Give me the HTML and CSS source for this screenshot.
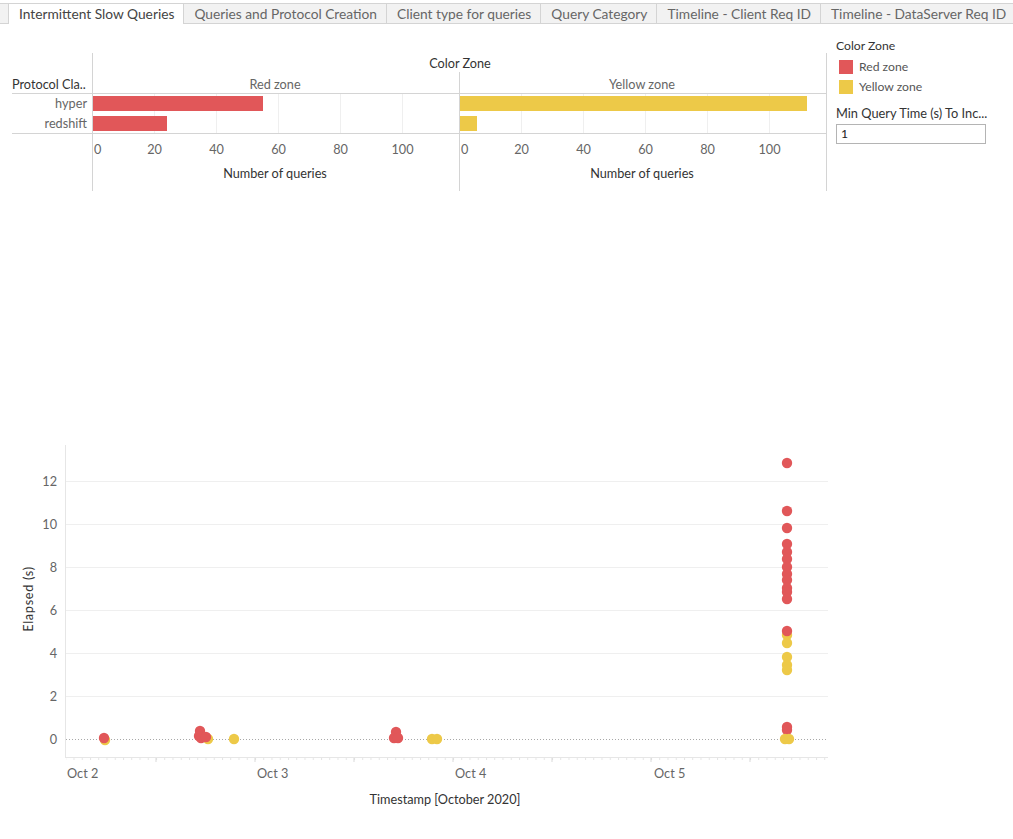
FILE: index.html
```html
<!DOCTYPE html>
<html>
<head>
<meta charset="utf-8">
<title>Intermittent Slow Queries</title>
<link rel="stylesheet" href="styles.css">
</head>
<body>
<div class="tabs">
  <div class="tab active">Intermittent Slow Queries</div>
  <div class="tab">Queries and Protocol Creation</div>
  <div class="tab">Client type for queries</div>
  <div class="tab">Query Category</div>
  <div class="tab">Timeline - Client Req ID</div>
  <div class="tab">Timeline - DataServer Req ID</div>
</div>

<div class="top">
  <svg class="bars" width="830" height="160" viewBox="0 38 830 160">
    <text x="460" y="68" text-anchor="middle" class="t-dark">Color Zone</text>
    <path d="M154.5 94V133 M216.5 94V133 M278.5 94V133 M340.5 94V133 M402.5 94V133 M521.5 94V133 M583.5 94V133 M645.5 94V133 M707.5 94V133 M769.5 94V133" class="grid"/>
    <path d="M92.5 53V191 M459.5 72V191 M826.5 53V191 M12 93.5H827 M12 133.5H827" class="frame"/>
    <text x="12" y="89" class="t-dark">Protocol Cla..</text>
    <text x="275" y="89" text-anchor="middle" class="t-light">Red zone</text>
    <text x="642" y="89" text-anchor="middle" class="t-light">Yellow zone</text>
    <text x="87" y="108" text-anchor="end" class="t-light">hyper</text>
    <text x="87" y="128" text-anchor="end" class="t-light">redshift</text>
    <rect x="93" y="96" width="170" height="15" class="red"/>
    <rect x="93" y="116" width="74" height="15" class="red"/>
    <rect x="460" y="96" width="347" height="15" class="yellow"/>
    <rect x="460" y="116" width="17" height="15" class="yellow"/>
    <g class="t-light">
      <text x="94" y="154">0</text>
      <text x="154.5" y="154" text-anchor="middle">20</text>
      <text x="216.5" y="154" text-anchor="middle">40</text>
      <text x="278.5" y="154" text-anchor="middle">60</text>
      <text x="340.5" y="154" text-anchor="middle">80</text>
      <text x="402.5" y="154" text-anchor="middle">100</text>
      <text x="461" y="154">0</text>
      <text x="521.5" y="154" text-anchor="middle">20</text>
      <text x="583.5" y="154" text-anchor="middle">40</text>
      <text x="645.5" y="154" text-anchor="middle">60</text>
      <text x="707.5" y="154" text-anchor="middle">80</text>
      <text x="769.5" y="154" text-anchor="middle">100</text>
    </g>
    <text x="275" y="178" text-anchor="middle" class="t-dark">Number of queries</text>
    <text x="642" y="178" text-anchor="middle" class="t-dark">Number of queries</text>
  </svg>

  <div class="legend">
    <div class="legend-title">Color Zone</div>
    <div class="legend-items">
      <div class="legend-item"><span class="swatch swatch-red"></span>Red zone</div>
      <div class="legend-item"><span class="swatch swatch-yellow"></span>Yellow zone</div>
    </div>
    <div class="param-label">Min Query Time (s) To Inc...</div>
    <div class="param-input">1</div>
  </div>
</div>

<svg class="scatter" width="840" height="409" viewBox="0 430 840 409">
  <defs>
    <pattern id="minor" patternUnits="userSpaceOnUse" x="57" y="757" width="8.25" height="10">
      <rect x="0" y="0" width="1" height="3" fill="#e4e4e4"/>
    </pattern>
    <pattern id="major" patternUnits="userSpaceOnUse" x="155.5" y="757" width="99" height="10">
      <rect x="0" y="0" width="1" height="5" fill="#d8d8d8"/>
    </pattern>
  </defs>
  <path d="M66 481.5H828 M66 524.5H828 M66 567.5H828 M66 610.5H828 M66 653.5H828 M66 696.5H828" class="grid"/>
  <path d="M65.5 445V757 M65 757.5H828" class="axis"/>
  <rect x="66" y="758" width="762" height="3" fill="url(#minor)"/>
  <rect x="66" y="758" width="762" height="5" fill="url(#major)"/>
  <path d="M66 739.5H828" class="zero"/>

  <g class="t-light" text-anchor="end">
    <text x="57" y="486">12</text>
    <text x="57" y="529">10</text>
    <text x="57" y="572">8</text>
    <text x="57" y="615">6</text>
    <text x="57" y="658">4</text>
    <text x="57" y="701">2</text>
    <text x="57" y="744">0</text>
  </g>
  <text class="t-dark ylabel" transform="translate(33 599) rotate(-90)" text-anchor="middle">Elapsed (s)</text>

  <g class="t-light">
    <text x="67" y="778">Oct 2</text>
    <text x="257" y="778">Oct 3</text>
    <text x="455" y="778">Oct 4</text>
    <text x="654" y="778">Oct 5</text>
  </g>
  <text x="445" y="804" text-anchor="middle" class="t-dark">Timestamp [October 2020]</text>

  <g class="yellow">
    <circle cx="105" cy="740" r="5.2"/>
    <circle cx="208" cy="739" r="5.2"/>
    <circle cx="234" cy="739" r="5.2"/>
    <circle cx="432" cy="739" r="5.2"/>
    <circle cx="437" cy="739" r="5.2"/>
    <circle cx="787" cy="635" r="5.2"/>
    <circle cx="787" cy="643" r="5.2"/>
    <circle cx="787" cy="657" r="5.2"/>
    <circle cx="787" cy="665" r="5.2"/>
    <circle cx="787" cy="670" r="5.2"/>
  </g>
  <g class="red">
    <circle cx="104" cy="738" r="5.2"/>
    <circle cx="200" cy="731" r="5.2"/>
    <circle cx="199" cy="736" r="5.2"/>
    <circle cx="201" cy="738" r="5.2"/>
    <circle cx="206" cy="737" r="5.2"/>
    <circle cx="396" cy="732" r="5.2"/>
    <circle cx="394" cy="738" r="5.2"/>
    <circle cx="398" cy="738" r="5.2"/>
    <circle cx="787" cy="463" r="5.2"/>
    <circle cx="787" cy="511" r="5.2"/>
    <circle cx="787" cy="528" r="5.2"/>
    <circle cx="787" cy="544" r="5.2"/>
    <circle cx="787" cy="552" r="5.2"/>
    <circle cx="787" cy="559" r="5.2"/>
    <circle cx="787" cy="567" r="5.2"/>
    <circle cx="787" cy="574" r="5.2"/>
    <circle cx="787" cy="580" r="5.2"/>
    <circle cx="787" cy="588" r="5.2"/>
    <circle cx="787" cy="592" r="5.2"/>
    <circle cx="787" cy="599" r="5.2"/>
    <circle cx="787" cy="631" r="5.2"/>
    <circle cx="787" cy="727" r="5.2"/>
    <circle cx="787" cy="730" r="5.2"/>
  </g>
  <g class="yellow">
    <circle cx="785" cy="739" r="5.2"/>
    <circle cx="789" cy="739" r="5.2"/>
  </g>
</svg>
</body>
</html>
```

FILE: styles.css
```css
html, body {
  margin: 0;
  padding: 0;
  background: #ffffff;
  font-family: Lato, "Open Sans", "Liberation Sans", sans-serif;
}

.tabs {
  display: flex;
  margin-top: 3px;
  height: 19px;
  padding-left: 8px;
  background: #f2f2f2;
  border-top: 1px solid #d4d4d4;
  border-bottom: 1px solid #d4d4d4;
}

.tab {
  padding: 0 9px 0 10px;
  font-size: 13.75px;
  line-height: 19px;
  color: #666666;
  border-right: 1px solid #d4d4d4;
  white-space: nowrap;
}

.tab.active {
  background: #ffffff;
  color: #444444;
  border-left: 1px solid #d4d4d4;
  height: 20px;
}

.top {
  display: flex;
  margin-top: 14px;
}

.bars {
  display: block;
  flex: none;
}

svg text {
  font-family: Lato, "Open Sans", "Liberation Sans", sans-serif;
  font-size: 12.7px;
}

.t-dark { fill: #333333; }
.t-light { fill: #666666; }

.frame { stroke: #d4d4d4; stroke-width: 1; fill: none; }
.grid { stroke: #efefef; stroke-width: 1; fill: none; }
.axis { stroke: #e6e6e6; stroke-width: 1; fill: none; }
.zero { stroke: #a8a8a8; stroke-width: 1; stroke-dasharray: 1 2; fill: none; }

.red { fill: #e15759; }
.yellow { fill: #edc948; }

.legend {
  padding-left: 6px;
  width: 177px;
  font-size: 12.2px;
}

.legend-title {
  line-height: 16px;
  color: #333333;
}

.legend-items {
  display: flex;
  flex-direction: column;
  gap: 6px;
  margin-top: 6px;
}

.legend-item {
  display: flex;
  align-items: center;
  gap: 6px;
  height: 14px;
  line-height: 14px;
  color: #555555;
  padding-left: 3px;
}

.swatch {
  width: 14px;
  height: 14px;
  flex: none;
}

.swatch-red { background: #e15759; }
.swatch-yellow { background: #edc948; }

.param-label {
  margin-top: 11px;
  line-height: 16px;
  font-size: 12.8px;
  color: #333333;
  white-space: nowrap;
}

.param-input {
  box-sizing: border-box;
  margin-top: 3px;
  width: 150px;
  height: 20px;
  border: 1px solid #b4b4b4;
  padding-left: 4px;
  line-height: 18px;
  color: #222222;
}

.scatter {
  display: block;
  margin-top: 232px;
}

.ylabel {
  letter-spacing: 0.7px;
}
```
